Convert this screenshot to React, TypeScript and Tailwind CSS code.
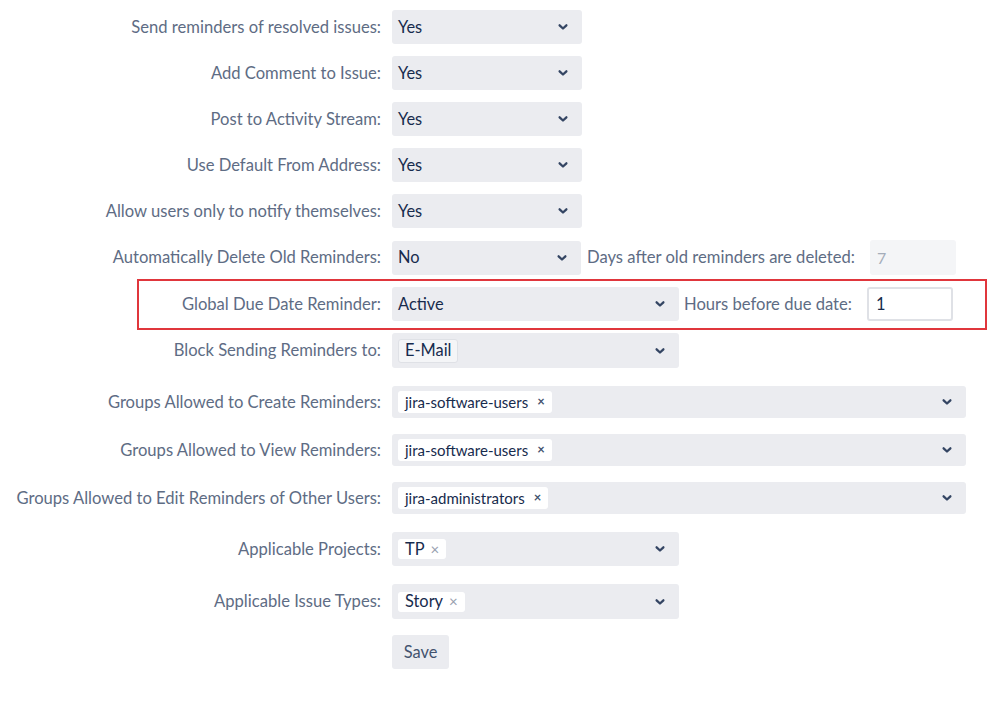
import React from 'react';

const Chevron = () => (
  <svg width="12" height="12" viewBox="0 0 12 12" className="shrink-0 text-[#344563]">
    <path d="M2.6 4.3 L6 7.5 L9.4 4.3" fill="none" stroke="currentColor" strokeWidth="2.3" strokeLinecap="round" strokeLinejoin="round" />
  </svg>
);

function Row({ label, mt, children }: { label: string; mt: string; children: React.ReactNode }) {
  return (
    <div className={`flex items-center ${mt}`}>
      <div className="w-[392px] shrink-0 pr-[11px] text-right text-[16.6px] text-[#5e6c84]">{label}</div>
      {children}
    </div>
  );
}

function Select({ value, w, h = 'h-[34px]', children }: { value?: string; w: string; h?: string; children?: React.ReactNode }) {
  return (
    <div className={`flex ${w} ${h} items-center justify-between rounded-[3px] bg-[#ebecf0] pl-[6px] pr-[13px]`}>
      <div className="flex items-center text-[16.4px] text-[#172b4d]">{value ?? children}</div>
      <Chevron />
    </div>
  );
}

function GroupChip({ name }: { name: string }) {
  return (
    <span className="flex h-[22px] items-center gap-[9px] rounded-[3px] bg-white px-[7px] text-[15px] text-[#172b4d]">
      {name}
      <span className="text-[13px] font-bold text-[#42526e]">×</span>
    </span>
  );
}

function LightChip({ name }: { name: string }) {
  return (
    <span className="flex h-[20px] items-center gap-[6px] rounded-[3px] bg-white px-[7px] text-[16.4px] text-[#172b4d]">
      {name}
      <span className="text-[15px] text-[#97a0af]">×</span>
    </span>
  );
}

export default function App() {
  return (
    <div className="min-h-[712px] w-[999px] bg-white pt-[10px]" style={{ fontFamily: 'Lato, "Liberation Sans", sans-serif' }}>
      <Row label="Send reminders of resolved issues:" mt="mt-0">
        <Select value="Yes" w="w-[190px]" />
      </Row>
      <Row label="Add Comment to Issue:" mt="mt-[12px]">
        <Select value="Yes" w="w-[190px]" />
      </Row>
      <Row label="Post to Activity Stream:" mt="mt-[12px]">
        <Select value="Yes" w="w-[190px]" />
      </Row>
      <Row label="Use Default From Address:" mt="mt-[12px]">
        <Select value="Yes" w="w-[190px]" />
      </Row>
      <Row label="Allow users only to notify themselves:" mt="mt-[12px]">
        <Select value="Yes" w="w-[190px]" />
      </Row>
      <Row label="Automatically Delete Old Reminders:" mt="mt-[12px]">
        <Select value="No" w="w-[189px]" />
        <span className="ml-[6px] text-[16.6px] text-[#5e6c84]">Days after old reminders are deleted:</span>
        <div className="ml-[15px] flex h-[35px] w-[86px] items-center rounded-[3px] bg-[#f4f5f7] px-[7px] text-[16px] text-[#a5adba]">7</div>
      </Row>
      <div className="relative mt-[12px]">
        <Row label="Global Due Date Reminder:" mt="mt-0">
          <Select value="Active" w="w-[287px]" />
          <span className="ml-[5px] text-[16.6px] text-[#5e6c84]">Hours before due date:</span>
          <div className="ml-[15px] flex h-[34px] w-[86px] items-center rounded-[3px] border-2 border-[#dfe1e6] bg-white px-[7px] text-[16.4px] text-[#172b4d]">1</div>
        </Row>
        <div className="pointer-events-none absolute left-[137px] top-[-8px] h-[51px] w-[850px] border-2 border-[#e0363c]" />
      </div>
      <Row label="Block Sending Reminders to:" mt="mt-[12px]">
        <Select w="w-[287px]" h="h-[35px]">
          <span className="flex h-[24px] items-center rounded-[3px] border border-[#dfe1e6] bg-[#f4f5f7] px-[6px] text-[16.4px] text-[#172b4d]">E-Mail</span>
        </Select>
      </Row>
      <Row label="Groups Allowed to Create Reminders:" mt="mt-[18px]">
        <Select w="w-[574px]" h="h-[32px]">
          <GroupChip name="jira-software-users" />
        </Select>
      </Row>
      <Row label="Groups Allowed to View Reminders:" mt="mt-[16px]">
        <Select w="w-[574px]" h="h-[32px]">
          <GroupChip name="jira-software-users" />
        </Select>
      </Row>
      <Row label="Groups Allowed to Edit Reminders of Other Users:" mt="mt-[16px]">
        <Select w="w-[574px]" h="h-[32px]">
          <GroupChip name="jira-administrators" />
        </Select>
      </Row>
      <Row label="Applicable Projects:" mt="mt-[18px]">
        <Select w="w-[287px]">
          <LightChip name="TP" />
        </Select>
      </Row>
      <Row label="Applicable Issue Types:" mt="mt-[18px]">
        <Select w="w-[287px]" h="h-[35px]">
          <LightChip name="Story" />
        </Select>
      </Row>
      <div className="mt-[16px] pl-[392px]">
        <button className="h-[34px] w-[57px] rounded-[3px] bg-[#ebecf0] text-[16.4px] text-[#42526e]">Save</button>
      </div>
    </div>
  );
}
